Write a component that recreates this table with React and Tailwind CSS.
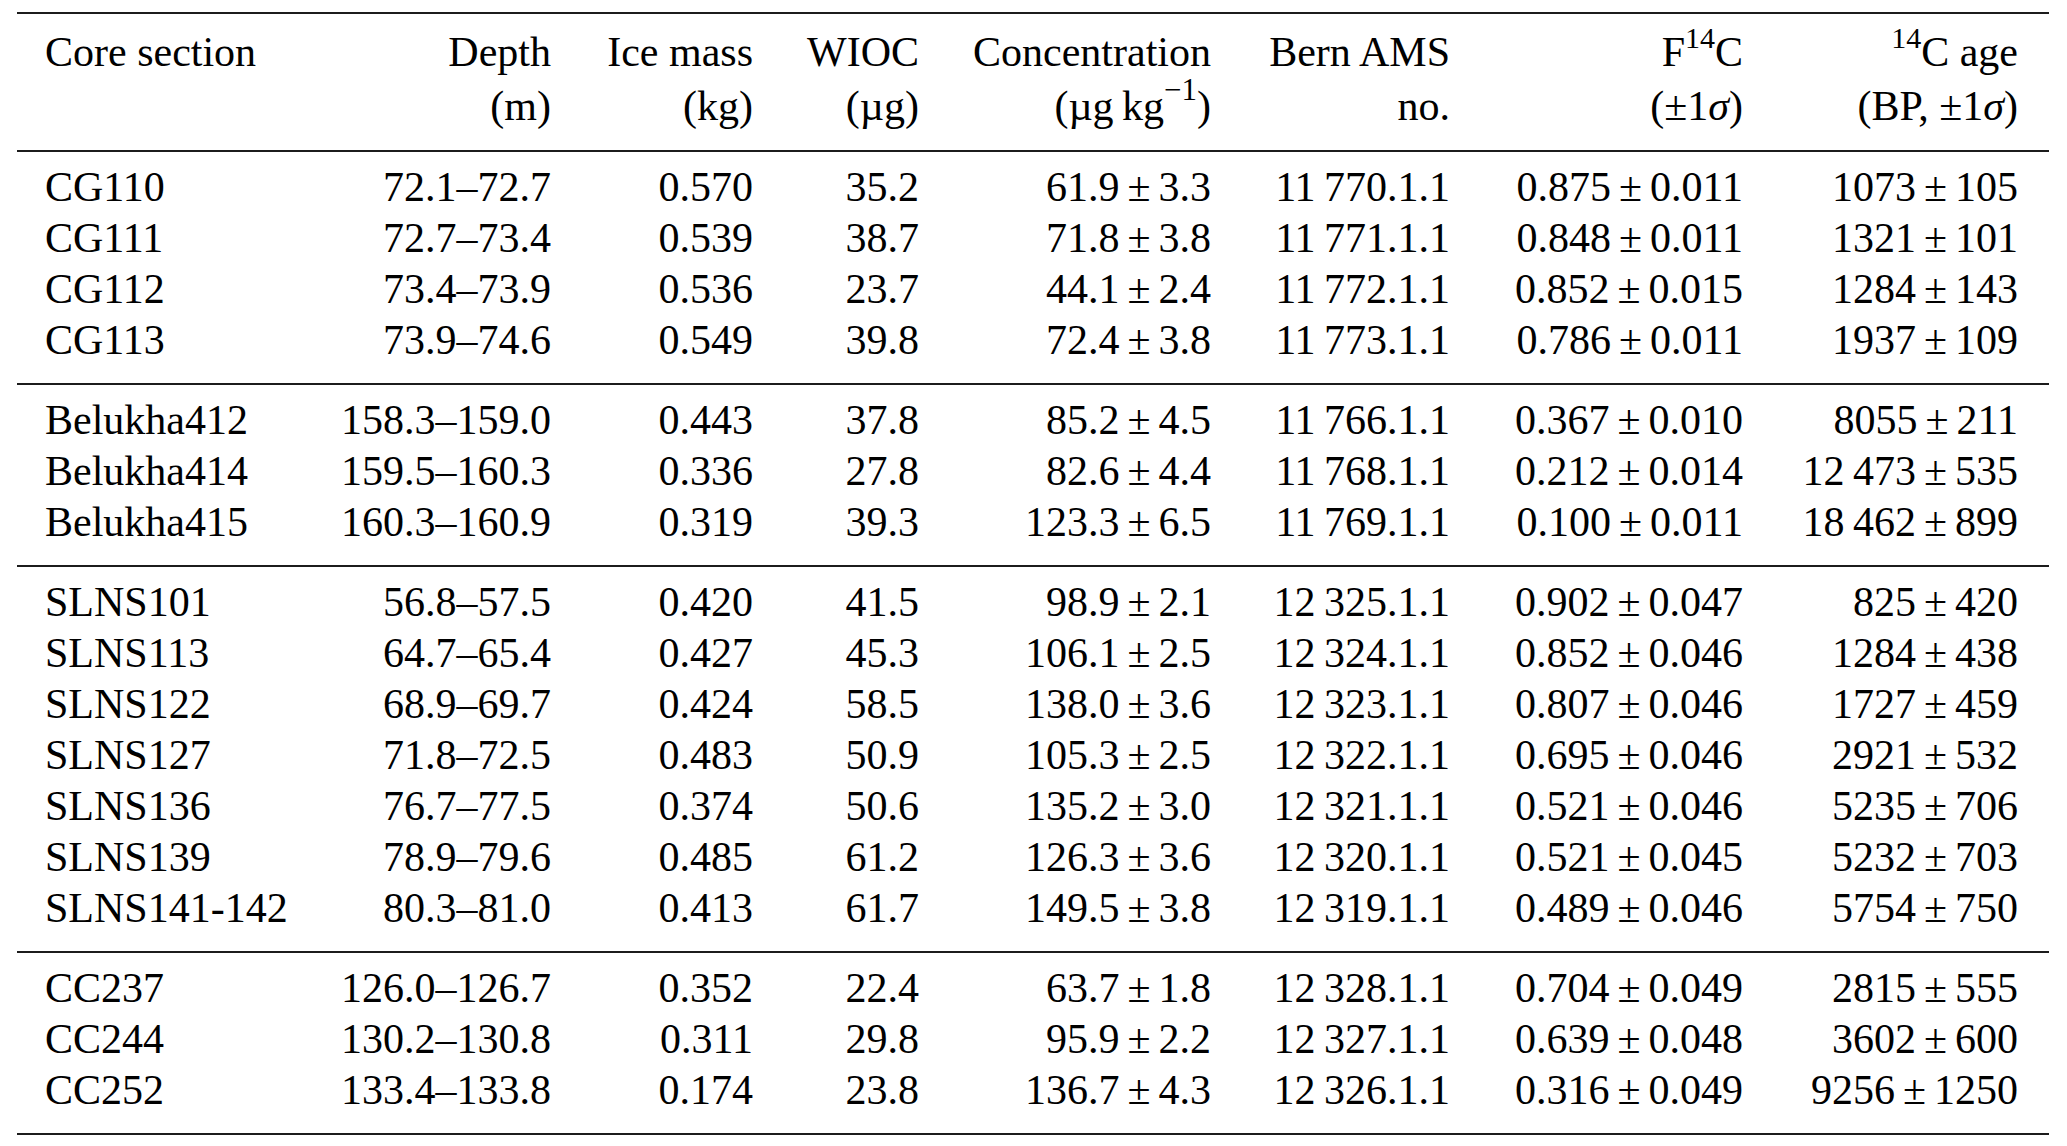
const groups = [
  [
    ["CG110", "72.1–72.7", "0.570", "35.2", "61.9", "3.3", "11 770.1.1", "0.875", "0.011", "1073", "105"],
    ["CG111", "72.7–73.4", "0.539", "38.7", "71.8", "3.8", "11 771.1.1", "0.848", "0.011", "1321", "101"],
    ["CG112", "73.4–73.9", "0.536", "23.7", "44.1", "2.4", "11 772.1.1", "0.852", "0.015", "1284", "143"],
    ["CG113", "73.9–74.6", "0.549", "39.8", "72.4", "3.8", "11 773.1.1", "0.786", "0.011", "1937", "109"],
  ],
  [
    ["Belukha412", "158.3–159.0", "0.443", "37.8", "85.2", "4.5", "11 766.1.1", "0.367", "0.010", "8055", "211"],
    ["Belukha414", "159.5–160.3", "0.336", "27.8", "82.6", "4.4", "11 768.1.1", "0.212", "0.014", "12 473", "535"],
    ["Belukha415", "160.3–160.9", "0.319", "39.3", "123.3", "6.5", "11 769.1.1", "0.100", "0.011", "18 462", "899"],
  ],
  [
    ["SLNS101", "56.8–57.5", "0.420", "41.5", "98.9", "2.1", "12 325.1.1", "0.902", "0.047", "825", "420"],
    ["SLNS113", "64.7–65.4", "0.427", "45.3", "106.1", "2.5", "12 324.1.1", "0.852", "0.046", "1284", "438"],
    ["SLNS122", "68.9–69.7", "0.424", "58.5", "138.0", "3.6", "12 323.1.1", "0.807", "0.046", "1727", "459"],
    ["SLNS127", "71.8–72.5", "0.483", "50.9", "105.3", "2.5", "12 322.1.1", "0.695", "0.046", "2921", "532"],
    ["SLNS136", "76.7–77.5", "0.374", "50.6", "135.2", "3.0", "12 321.1.1", "0.521", "0.046", "5235", "706"],
    ["SLNS139", "78.9–79.6", "0.485", "61.2", "126.3", "3.6", "12 320.1.1", "0.521", "0.045", "5232", "703"],
    ["SLNS141-142", "80.3–81.0", "0.413", "61.7", "149.5", "3.8", "12 319.1.1", "0.489", "0.046", "5754", "750"],
  ],
  [
    ["CC237", "126.0–126.7", "0.352", "22.4", "63.7", "1.8", "12 328.1.1", "0.704", "0.049", "2815", "555"],
    ["CC244", "130.2–130.8", "0.311", "29.8", "95.9", "2.2", "12 327.1.1", "0.639", "0.048", "3602", "600"],
    ["CC252", "133.4–133.8", "0.174", "23.8", "136.7", "4.3", "12 326.1.1", "0.316", "0.049", "9256", "1250"],
  ],
];

const cols = "grid grid-cols-[255px_251px_202px_166px_292px_239px_293px_275px]";

const Rule = () => <div className="h-[2px] bg-[#1c1c1c]" />;

// thousands separator is a thin space, as in the typeset table
const thin = (s) => s.replace(" ", "\u2009");

const PM = ({ a, b }) => (
  <>
    {thin(a)}
    <span className="mx-[8px]">±</span>
    {b}
  </>
);

const Row = ({ r }) => (
  <div className={cols + " leading-[51px]"}>
    <div className="text-left">{r[0]}</div>
    <div className="text-right">{r[1]}</div>
    <div className="text-right">{r[2]}</div>
    <div className="text-right">{r[3]}</div>
    <div className="text-right">
      <PM a={r[4]} b={r[5]} />
    </div>
    <div className="text-right">{thin(r[6])}</div>
    <div className="text-right">
      <PM a={r[7]} b={r[8]} />
    </div>
    <div className="text-right">
      <PM a={r[9]} b={r[10]} />
    </div>
  </div>
);

export default function App() {
  return (
    <div
      className="min-h-screen bg-white pt-[12px] text-black text-[42px]"
      style={{ fontFamily: '"Liberation Serif", "Times New Roman", serif' }}
    >
      <div className="ml-[17px] w-[2032px]">
        <Rule />
        <div className={cols + " pl-[28px] pt-[11px] pb-[17px] leading-[54px]"}>
          <div className="text-left">Core section</div>
          <div className="text-right">
            Depth
            <br />
            (m)
          </div>
          <div className="text-right">
            Ice mass
            <br />
            (kg)
          </div>
          <div className="text-right">
            WIOC
            <br />
            (µg)
          </div>
          <div className="text-right">
            Concentration
            <br />
            (µg{"\u2009"}kg<sup className="text-[31px] -top-[0.65em]">−1</sup>)
          </div>
          <div className="text-right">
            Bern AMS
            <br />
            no.
          </div>
          <div className="text-right">
            F<sup className="text-[30px] -top-[0.6em]">14</sup>C
            <br />
            (±1<i>σ</i>)
          </div>
          <div className="text-right">
            <sup className="text-[30px] -top-[0.6em]">14</sup>C age
            <br />
            (BP, ±1<i>σ</i>)
          </div>
        </div>
        <Rule />
        {groups.map((g, i) => (
          <div key={i}>
            <div className="pl-[28px] pt-[10px] pb-[17px]">
              {g.map((r) => (
                <Row key={r[0]} r={r} />
              ))}
            </div>
            <Rule />
          </div>
        ))}
      </div>
    </div>
  );
}
